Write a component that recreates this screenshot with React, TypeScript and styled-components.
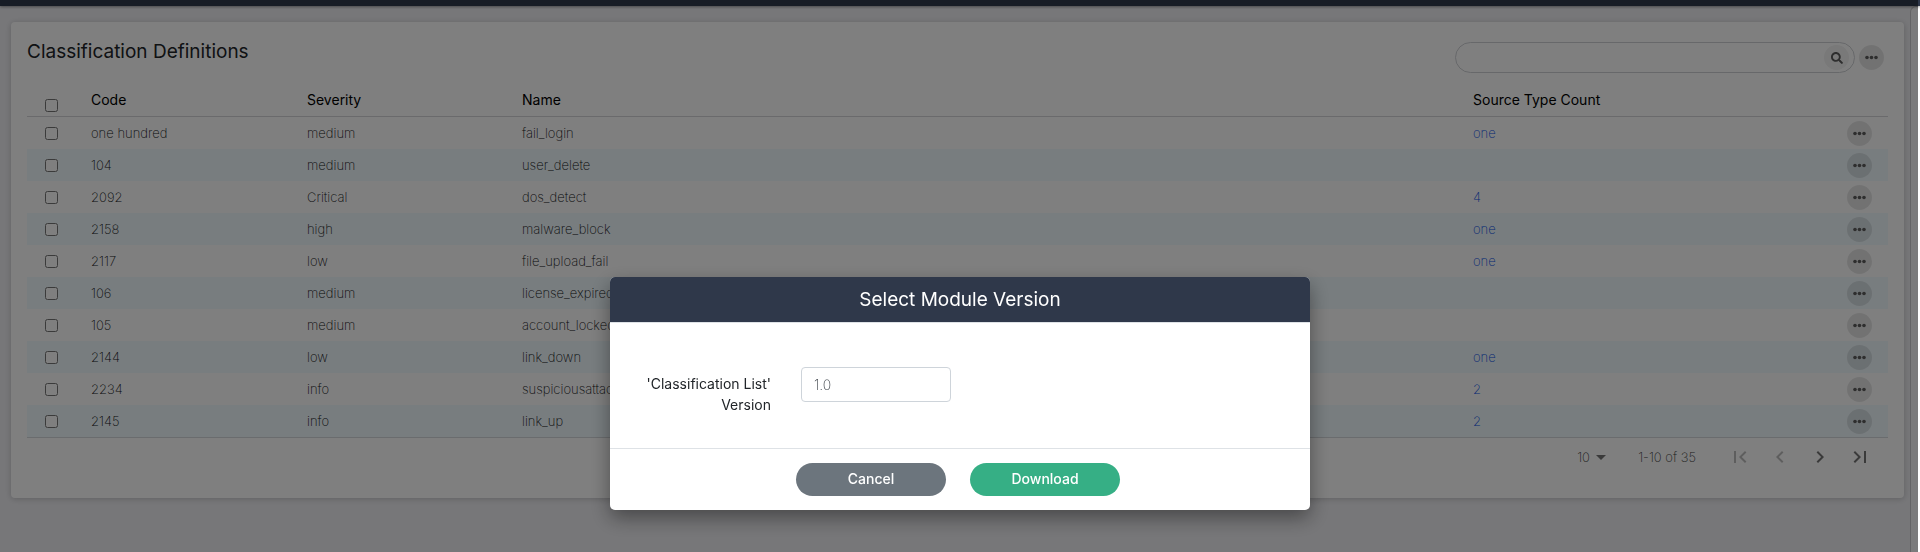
import React from "react";
import styled, { createGlobalStyle, css } from "styled-components";

const GlobalStyle = createGlobalStyle`
  *, *::before, *::after { box-sizing: border-box; }
  body {
    margin: 0;
    background: #ffffff;
    color: #212529;
    font-family: Inter, "Open Sans", sans-serif;
    font-size: 14px;
    font-weight: 200;
  }
  button, input, select { font: inherit; }
`;

const Page = styled.div`
  display: flex;
  flex-direction: column;
  min-height: 100vh;
`;

const TopBar = styled.header`
  height: 6px;
  background: #2f384a;
  box-shadow: 0 1px 3px rgba(0, 0, 0, 0.4);
  z-index: 1;
`;

const Main = styled.main`
  display: flex;
  flex: 1;
  margin-right: 2px;
  background: #efeff3;
`;

const Content = styled.div`
  flex: 1;
  min-width: 0;
  padding: 16px 6px 16px 11px;
`;

const SideRail = styled.aside`
  width: 8px;
  border: 1px solid #c8c8cc;
  border-width: 1px 0 0 1px;
  border-top-left-radius: 6px;
  background: #f7f7f8;
`;

const Card = styled.section`
  padding: 20px 16px 22px;
  background: #ffffff;
  border-radius: 4px;
  box-shadow: 0 1px 6px rgba(0, 0, 0, 0.2);
`;

const CardHeader = styled.div`
  display: flex;
  justify-content: space-between;
  gap: 24px;
  padding-right: 4px;
`;

const CardTitle = styled.h1`
  margin: 0;
  font-size: 19px;
  line-height: 20px;
  font-weight: 400;
`;

const Tools = styled.div`
  display: flex;
  align-items: center;
  gap: 4px;
`;

const SearchBox = styled.form`
  display: flex;
  align-items: center;
  width: 400px;
  height: 31px;
  padding: 0 5px 0 16px;
  border: 1px solid #ced0d4;
  border-radius: 16px;
`;

const SearchInput = styled.input`
  flex: 1;
  min-width: 0;
  border: 0;
  outline: 0;
  background: transparent;
`;

const RoundButton = styled.button<{ $pale?: boolean }>`
  display: inline-flex;
  align-items: center;
  justify-content: center;
  width: 25px;
  height: 25px;
  padding: 0;
  border: 0;
  border-radius: 50%;
  background: ${(p) => (p.$pale ? "#f2f2f2" : "rgba(0, 0, 0, 0.1)")};
  color: #5c5c5c;
`;

const Table = styled.table`
  width: 100%;
  margin-top: 8px;
  table-layout: fixed;
  border-collapse: separate;
  border-spacing: 0;
  border-bottom: 1px solid #d4d8dc;
`;

const Col = styled.col<{ $width?: number }>`
  ${(p) => p.$width && css`width: ${p.$width}px;`}
`;

const HeadCell = styled.th`
  height: 36px;
  padding: 2px 8px 0;
  border-bottom: 1px solid #d4d4d8;
  color: #000000;
  font-weight: 400;
  text-align: left;
`;

const HeadCheckCell = styled(HeadCell)`
  padding: 14px 0 0 18px;
`;

const Row = styled.tr`
  &:nth-child(even) { background: #f0fafe; }
`;

const Cell = styled.td`
  height: 32px;
  padding: 0 8px 1px;
  color: #101214;
  font-size: 13px;
  line-height: 16px;
  white-space: nowrap;
`;

const CheckCell = styled(Cell)`
  padding: 0 0 0 18px;
`;

const ActionCell = styled(Cell)`
  padding: 0 16px 0 0;
  line-height: 0;
  text-align: right;
`;

const Checkbox = styled.input`
  display: block;
  width: 13px;
  height: 13px;
  margin: 0;
`;

const CountLink = styled.a`
  color: #0a50e8;
  text-decoration: none;
`;

const Pager = styled.nav`
  display: flex;
  align-items: center;
  justify-content: flex-end;
  height: 38px;
  padding-right: 8px;
  color: #404040;
  font-size: 13px;
`;

const PageSize = styled.div`
  display: flex;
  align-items: center;
  margin-right: 32px;
  color: #757575;
`;

const PageSizeSelect = styled.select`
  width: 28px;
  margin-right: -9px;
  padding: 0;
  border: 0;
  appearance: none;
  background: transparent;
  color: #404040;
`;

const PageRange = styled.span`
  margin-right: 24px;
`;

const PagerButton = styled.button`
  display: flex;
  width: 40px;
  padding: 8px;
  border: 0;
  background: transparent;
  color: #757575;
  &:disabled { color: #bdbdbd; }
`;

const Backdrop = styled.div`
  position: fixed;
  inset: 0 2px 0 0;
  z-index: 2;
  display: flex;
  align-items: flex-start;
  justify-content: center;
  padding: 277px 16px 0 18px;
  background: rgba(0, 0, 0, 0.5);
`;

const Dialog = styled.div`
  width: 100%;
  max-width: 700px;
  overflow: hidden;
  border-radius: 5px;
  background: #ffffff;
`;

const DialogShadow = styled.div`
  display: flex;
  justify-content: center;
  width: 100%;
  max-width: 700px;
  border-radius: 5px;
  box-shadow: 0 8px 20px rgba(0, 0, 0, 0.4);
`;

const DialogTitle = styled.h2`
  margin: 0;
  padding: 11px 16px;
  border-bottom: 1px solid #dee2e6;
  background: #2f384a;
  color: #ffffff;
  font-size: 19px;
  line-height: 23px;
  font-weight: 400;
  text-align: center;
`;

const DialogBody = styled.div`
  display: flex;
  align-items: flex-start;
  gap: 30px;
  padding: 44px 32px 33px;
`;

const FieldLabel = styled.label`
  width: 129px;
  padding-top: 6px;
  line-height: 21px;
  font-weight: 400;
  text-align: right;
`;

const TextField = styled.input`
  width: 150px;
  height: 35px;
  padding: 0 12px;
  border: 1px solid #ced4da;
  border-radius: 4px;
  background: #ffffff;
  color: #343a40;
`;

const DialogFooter = styled.div`
  display: flex;
  justify-content: center;
  gap: 24px;
  padding: 14px 20px 14px 16px;
  border-top: 1px solid #dee2e6;
`;

const PillButton = styled.button<{ $primary?: boolean }>`
  width: 150px;
  height: 33px;
  padding: 0 16px 2px;
  border: 0;
  border-radius: 17px;
  background: ${(p) => (p.$primary ? "#36af85" : "#6c757d")};
  color: #ffffff;
  font-weight: 500;
`;

const DotsIcon = () => (
  <svg width="13" height="13" viewBox="0 0 13 13" fill="currentColor" aria-hidden="true">
    <circle cx="2" cy="6.5" r="1.8" />
    <circle cx="6.5" cy="6.5" r="1.8" />
    <circle cx="11" cy="6.5" r="1.8" />
  </svg>
);

const SearchIcon = () => (
  <svg width="12" height="12" viewBox="0 0 512 512" fill="currentColor" aria-hidden="true">
    <path d="M505 442.7L405.3 343c-4.5-4.5-10.6-7-17-7H372c27.6-35.3 44-79.7 44-128C416 93.1 322.9 0 208 0S0 93.1 0 208s93.1 208 208 208c48.3 0 92.7-16.4 128-44v16.3c0 6.4 2.5 12.5 7 17l99.7 99.7c9.4 9.4 24.6 9.4 33.9 0l28.3-28.3c9.4-9.4 9.4-24.6.1-34zM208 336c-70.7 0-128-57.2-128-128 0-70.7 57.2-128 128-128 70.7 0 128 57.2 128 128 0 70.7-57.2 128-128 128z" />
  </svg>
);

const Glyph = ({ d }: { d: string }) => (
  <svg width="24" height="24" viewBox="0 0 24 24" fill="currentColor" aria-hidden="true">
    <path d={d} />
  </svg>
);

const CaretIcon = () => (
  <svg width="10" height="5" viewBox="0 0 10 5" fill="currentColor" aria-hidden="true">
    <path d="M0 0h10L5 5z" />
  </svg>
);

const pagerButtons = [
  { label: "First page", disabled: true, d: "M18.41 16.59L13.82 12l4.59-4.59L17 6l-6 6 6 6zM6 6h2v12H6z" },
  { label: "Previous page", disabled: true, d: "M15.41 7.41L14 6l-6 6 6 6 1.41-1.41L10.83 12z" },
  { label: "Next page", disabled: false, d: "M10 6L8.59 7.41 13.17 12l-4.58 4.59L10 18l6-6z" },
  { label: "Last page", disabled: false, d: "M5.59 7.41L10.18 12l-4.59 4.59L7 18l6-6-6-6zM16 6h2v12h-2z" },
];

const rows = [
  { code: "one hundred", severity: "medium", name: "fail_login", count: "one" },
  { code: "104", severity: "medium", name: "user_delete", count: "" },
  { code: "2092", severity: "Critical", name: "dos_detect", count: "4" },
  { code: "2158", severity: "high", name: "malware_block", count: "one" },
  { code: "2117", severity: "low", name: "file_upload_fail", count: "one" },
  { code: "106", severity: "medium", name: "license_expired", count: "" },
  { code: "105", severity: "medium", name: "account_locked", count: "" },
  { code: "2144", severity: "low", name: "link_down", count: "one" },
  { code: "2234", severity: "info", name: "suspiciousattack", count: "2" },
  { code: "2145", severity: "info", name: "link_up", count: "2" },
];

export default function App() {
  return (
    <>
      <GlobalStyle />
      <Page>
        <TopBar />
        <Main>
          <Content>
            <Card>
              <CardHeader>
                <CardTitle>Classification Definitions</CardTitle>
                <Tools>
                  <SearchBox role="search" onSubmit={(e) => e.preventDefault()}>
                    <SearchInput type="text" aria-label="Search definitions" />
                    <RoundButton $pale type="submit" aria-label="Search">
                      <SearchIcon />
                    </RoundButton>
                  </SearchBox>
                  <RoundButton type="button" aria-label="More options">
                    <DotsIcon />
                  </RoundButton>
                </Tools>
              </CardHeader>
              <Table>
                <colgroup>
                  <Col $width={56} />
                  <Col $width={216} />
                  <Col $width={215} />
                  <Col />
                  <Col $width={363} />
                  <Col $width={60} />
                </colgroup>
                <thead>
                  <tr>
                    <HeadCheckCell>
                      <Checkbox type="checkbox" aria-label="Select all" />
                    </HeadCheckCell>
                    <HeadCell>Code</HeadCell>
                    <HeadCell>Severity</HeadCell>
                    <HeadCell>Name</HeadCell>
                    <HeadCell>Source Type Count</HeadCell>
                    <HeadCell />
                  </tr>
                </thead>
                <tbody>
                  {rows.map((row) => (
                    <Row key={row.code}>
                      <CheckCell>
                        <Checkbox type="checkbox" aria-label={`Select ${row.name}`} />
                      </CheckCell>
                      <Cell>{row.code}</Cell>
                      <Cell>{row.severity}</Cell>
                      <Cell>{row.name}</Cell>
                      <Cell>{row.count && <CountLink href="#sources">{row.count}</CountLink>}</Cell>
                      <ActionCell>
                        <RoundButton type="button" aria-label={`Actions for ${row.name}`}>
                          <DotsIcon />
                        </RoundButton>
                      </ActionCell>
                    </Row>
                  ))}
                </tbody>
              </Table>
              <Pager aria-label="Pagination">
                <PageSize>
                  <PageSizeSelect aria-label="Rows per page" defaultValue="10">
                    <option>10</option>
                    <option>25</option>
                    <option>50</option>
                  </PageSizeSelect>
                  <CaretIcon />
                </PageSize>
                <PageRange>1-10 of 35</PageRange>
                {pagerButtons.map((b) => (
                  <PagerButton key={b.label} type="button" aria-label={b.label} disabled={b.disabled}>
                    <Glyph d={b.d} />
                  </PagerButton>
                ))}
              </Pager>
            </Card>
          </Content>
          <SideRail />
        </Main>
      </Page>
      <Backdrop>
        <DialogShadow>
          <Dialog role="dialog" aria-modal="true" aria-labelledby="version-title">
            <DialogTitle id="version-title">Select Module Version</DialogTitle>
            <DialogBody>
              <FieldLabel htmlFor="list-version">'Classification List' Version</FieldLabel>
              <TextField id="list-version" type="text" defaultValue="1.0" />
            </DialogBody>
            <DialogFooter>
              <PillButton type="button">Cancel</PillButton>
              <PillButton type="button" $primary>Download</PillButton>
            </DialogFooter>
          </Dialog>
        </DialogShadow>
      </Backdrop>
    </>
  );
}
